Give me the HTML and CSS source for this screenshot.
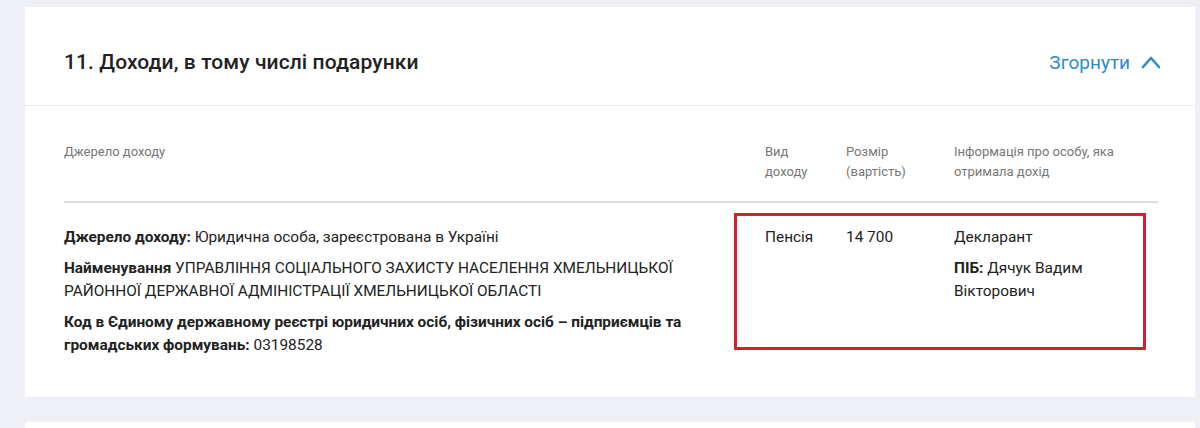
FILE: index.html
```html
<!DOCTYPE html>
<html lang="uk">
<head>
<meta charset="utf-8">
<link rel="stylesheet" href="styles.css">
</head>
<body>
<div class="page">
  <section class="card">
    <header class="card-head">
      <h2 class="card-title">11. Доходи, в тому числі подарунки</h2>
      <a class="toggle">Згорнути
        <svg class="chev" width="20" height="14" viewBox="0 0 20 14"><path d="M2 12 L10 3 L18 12" fill="none" stroke="#2f8bc9" stroke-width="2.6" stroke-linecap="round" stroke-linejoin="round"/></svg>
      </a>
    </header>
    <div class="card-body">
      <div class="grid thead">
        <div>Джерело доходу</div>
        <div>Вид<br>доходу</div>
        <div>Розмір<br>(вартість)</div>
        <div>Інформація про особу, яка<br>отримала дохід</div>
      </div>
      <div class="grid trow">
        <div class="src">
          <p><b>Джерело доходу:</b> Юридична особа, зареєстрована в Україні</p>
          <p><b>Найменування</b> УПРАВЛІННЯ СОЦІАЛЬНОГО ЗАХИСТУ НАСЕЛЕННЯ ХМЕЛЬНИЦЬКОЇ РАЙОННОЇ ДЕРЖАВНОЇ АДМІНІСТРАЦІЇ ХМЕЛЬНИЦЬКОЇ ОБЛАСТІ</p>
          <p><b>Код в Єдиному державному реєстрі юридичних осіб, фізичних осіб – підприємців та громадських формувань:</b> 03198528</p>
        </div>
        <div><p>Пенсія</p></div>
        <div><p>14 700</p></div>
        <div>
          <p>Декларант</p>
          <p><b>ПІБ:</b> Дячук Вадим Вікторович</p>
        </div>
        <div class="highlight"></div>
      </div>
    </div>
  </section>
  <section class="card next"></section>
</div>
</body>
</html>
```

FILE: styles.css
```css
* { box-sizing: border-box; }
html, body { margin: 0; padding: 0; }
body {
  background: #eef0f5;
  font-family: Roboto, "Noto Sans", "Liberation Sans", sans-serif;
  color: #222;
  width: 1200px;
  height: 428px;
  overflow: hidden;
}
.page {
  height: 428px;
  overflow: hidden;
  padding: 7px 5px 0 25px;
  display: flex;
  flex-direction: column;
  gap: 25px;
}
.card {
  background: #fff;
}
.card-head {
  height: 99px;
  border-bottom: 1px solid #ececf0;
  display: flex;
  align-items: center;
  justify-content: space-between;
  padding: 12px 34px 0 39px;
}
.card-title {
  margin: 0;
  font-size: 21px;
  font-weight: 500;
  color: #222;
  letter-spacing: 0.1px;
}
.toggle {
  display: flex;
  align-items: center;
  gap: 11px;
  color: #2f8bc9;
  font-size: 19px;
  cursor: pointer;
}
.chev { display: block; }
.card-body {
  padding: 36px 37px 40px 39px;
}
.grid {
  display: grid;
  grid-template-columns: 701px 81px 108px 204px;
}
.thead {
  font-size: 13px;
  line-height: 20px;
  color: #777;
  padding-bottom: 19px;
  border-bottom: 2px solid #dcdcdc;
}
.trow {
  position: relative;
  padding-top: 23px;
  font-size: 15.4px;
  line-height: 23px;
  color: #222;
}
.trow p { margin: 0 0 8px; }
.trow p:last-child { margin-bottom: 0; }
.trow b { font-weight: 700; }
.src { padding-right: 40px; }
.highlight {
  position: absolute;
  left: 670px;
  top: 10px;
  width: 412px;
  height: 137px;
  border: 3px solid #d4202c;
  pointer-events: none;
}
.next { flex: none; height: 12px; }
```
